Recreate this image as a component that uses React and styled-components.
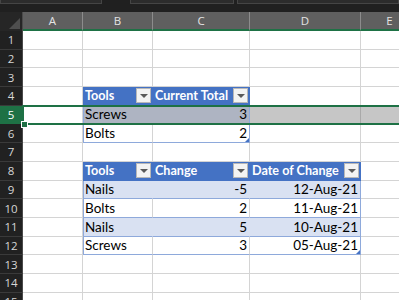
import React from "react";
import styled, { createGlobalStyle, css } from "styled-components";

const GlobalStyle = createGlobalStyle`
  html, body {
    margin: 0;
    padding: 0;
    background: #1f1f1f;
  }
`;

const COLUMNS = [
  { key: "A", width: 60 },
  { key: "B", width: 70 },
  { key: "C", width: 97 },
  { key: "D", width: 111 },
  { key: "E", width: 58 },
];

const ROW_COUNT = 15;
const SELECTED_ROW = 5;
const ACTIVE_COL = "A";

// cells that hold something: the two excel tables
const CELLS = {
  B4: { v: "Tools", head: true, filter: true, first: true },
  C4: { v: "Current Total", head: true, filter: true, last: true },
  B5: { v: "Screws", band: true, first: true },
  C5: { v: "3", num: true, band: true, last: true },
  B6: { v: "Bolts", table: true, first: true },
  C6: { v: "2", num: true, table: true, last: true, handle: true },

  B8: { v: "Tools", head: true, filter: true, first: true },
  C8: { v: "Change", head: true, filter: true },
  D8: { v: "Date of Change", head: true, filter: true, last: true },
  B9: { v: "Nails", band: true, first: true },
  C9: { v: "-5", num: true, band: true },
  D9: { v: "12-Aug-21", num: true, band: true, last: true },
  B10: { v: "Bolts", table: true, first: true },
  C10: { v: "2", num: true, table: true },
  D10: { v: "11-Aug-21", num: true, table: true, last: true },
  B11: { v: "Nails", band: true, first: true },
  C11: { v: "5", num: true, band: true },
  D11: { v: "10-Aug-21", num: true, band: true, last: true },
  B12: { v: "Screws", table: true, first: true },
  C12: { v: "3", num: true, table: true },
  D12: { v: "05-Aug-21", num: true, table: true, last: true, handle: true },
};

const Window = styled.div`
  width: 399px;
  height: 300px;
  overflow: hidden;
  display: flex;
  flex-direction: column;
  background: #ffffff;
`;

const TopBar = styled.div`
  height: 12px;
  flex: none;
  display: flex;
  align-items: flex-start;
  background: #202020;
`;

const BarBox = styled.div`
  height: 3px;
  width: ${(p) => (p.$width ? `${p.$width}px` : "auto")};
  flex: ${(p) => (p.$width ? "none" : 1)};
  margin-left: ${(p) => p.$gap || 0}px;
  background: #2c2c2c;
  border: 1px solid #454545;
  border-top: none;
`;

const HeaderRow = styled.div`
  display: flex;
  height: 19px;
  flex: none;
`;

const Corner = styled.div`
  width: 23px;
  flex: none;
  position: relative;
  background: #262626;
  border-right: 1px solid #4a4a4a;
  box-sizing: border-box;

  &::after {
    content: "";
    position: absolute;
    right: 2px;
    bottom: 2px;
    width: 0;
    height: 0;
    border-left: 11px solid transparent;
    border-bottom: 11px solid #4e4e4e;
  }
`;

const ColHead = styled.div`
  width: ${(p) => p.$width}px;
  flex: none;
  box-sizing: border-box;
  display: flex;
  align-items: center;
  justify-content: center;
  background: #5f5f5f;
  color: #e4e4e4;
  font-family: "Open Sans", "Liberation Sans", sans-serif;
  font-size: 11.5px;
  border-right: 1px solid #8c8c8c;
  border-bottom: 2px solid #1e7145;
`;

const Sheet = styled.div`
  display: flex;
  flex-direction: column;
`;

const Row = styled.div`
  display: flex;
  height: 18.7px;
  flex: none;
  position: relative;

  ${(p) =>
    p.$selected &&
    css`
      &::after {
        content: "";
        position: absolute;
        left: 22px;
        right: -4px;
        top: -1px;
        bottom: -1px;
        border: 2px solid #1e7145;
        border-right: none;
        pointer-events: none;
        z-index: 1;
      }
    `}
`;

const RowHead = styled.div`
  width: 23px;
  flex: none;
  box-sizing: border-box;
  display: flex;
  align-items: center;
  justify-content: center;
  background: ${(p) => (p.$selected ? "#1e7145" : "#212121")};
  color: ${(p) => (p.$selected ? "#ffffff" : "#d6d6d6")};
  font-family: "Open Sans", "Liberation Sans", sans-serif;
  font-size: 11.5px;
  border-right: 1px solid ${(p) => (p.$selected ? "#1e7145" : "#4a4a4a")};
  border-bottom: 1px solid ${(p) => (p.$selected ? "#1e7145" : "#3a3a3a")};
`;

const FillHandle = styled.div`
  position: absolute;
  left: 21px;
  bottom: -4px;
  width: 5px;
  height: 5px;
  background: #1e7145;
  border: 1px solid #ffffff;
  z-index: 2;
`;

const skin = {
  head: { bg: "#4472c4", right: "#4472c4", lastRight: "#4472c4", bottom: "#4472c4" },
  band: { bg: "#d9e1f2", right: "#d9e1f2", lastRight: "#8ea9db", bottom: "#8ea9db" },
  bandSel: { bg: "#aeb4c2", right: "#aeb4c2", lastRight: "#8ea9db", bottom: "#8ea9db" },
  body: { bg: "#ffffff", right: "#d4d4d4", lastRight: "#8ea9db", bottom: "#8ea9db" },
  plain: { bg: "#ffffff", right: "#d4d4d4", lastRight: "#d4d4d4", bottom: "#d4d4d4" },
  plainSel: { bg: "#c6c6c6", right: "#a9a9a9", lastRight: "#a9a9a9", bottom: "#a9a9a9" },
};

const Cell = styled.div`
  width: ${(p) => p.$width}px;
  flex: none;
  box-sizing: border-box;
  position: relative;
  display: flex;
  align-items: flex-end;
  justify-content: ${(p) => (p.$num ? "flex-end" : "flex-start")};
  padding: 0 2px 1px 2px;
  overflow: hidden;
  white-space: nowrap;
  font-family: Lato, "Liberation Sans", sans-serif;
  font-size: 13.5px;
  line-height: 16px;
  color: #000000;
  background: ${(p) => skin[p.$kind].bg};
  border-right: 1px solid
    ${(p) => (p.$last ? skin[p.$kind].lastRight : skin[p.$kind].right)};
  border-bottom: 1px solid ${(p) => skin[p.$kind].bottom};
  box-shadow: ${(p) => (p.$first && p.$kind !== "head" ? "inset 1px 0 0 #8ea9db" : "none")};

  ${(p) =>
    p.$kind === "head" &&
    css`
      align-items: center;
      justify-content: space-between;
      padding: 0 1px 0 2px;
      color: #ffffff;
      font-size: 12.6px;
      font-weight: 700;
    `}
`;

const FilterButton = styled.span`
  width: 15px;
  height: 15px;
  flex: none;
  box-sizing: border-box;
  display: flex;
  align-items: center;
  justify-content: center;
  margin-left: 2px;
  background: #f3f3f3;
  border: 1px solid #b8b8b8;

  &::before {
    content: "";
    width: 0;
    height: 0;
    border-left: 4px solid transparent;
    border-right: 4px solid transparent;
    border-top: 4px solid #5a5a5a;
  }
`;

const ResizeHandle = styled.span`
  position: absolute;
  right: 0;
  bottom: 0;
  width: 0;
  height: 0;
  border-left: 4px solid transparent;
  border-bottom: 4px solid #4472c4;
`;

function kindOf(cell, shaded) {
  if (cell && cell.head) return "head";
  if (cell && cell.band) return shaded ? "bandSel" : "band";
  if (cell && cell.table) return "body";
  return shaded ? "plainSel" : "plain";
}

function SheetRow({ index }) {
  const selected = index === SELECTED_ROW;
  return (
    <Row $selected={selected}>
      <RowHead $selected={selected}>{index}</RowHead>
      {COLUMNS.map((col) => {
        const cell = CELLS[col.key + index];
        const shaded = selected && col.key !== ACTIVE_COL;
        const kind = kindOf(cell, shaded);
        return (
          <Cell
            key={col.key}
            $width={col.width}
            $kind={kind}
            $num={cell && cell.num}
            $first={cell && cell.first}
            $last={cell && cell.last}
          >
            {cell && <span>{cell.v}</span>}
            {cell && cell.filter && <FilterButton />}
            {cell && cell.handle && <ResizeHandle />}
          </Cell>
        );
      })}
      {selected && <FillHandle />}
    </Row>
  );
}

export default function App() {
  const rows = Array.from({ length: ROW_COUNT }, (_, i) => i + 1);
  return (
    <>
      <GlobalStyle />
      <Window>
        <TopBar>
          <BarBox $width={100} />
          <BarBox $width={102} $gap={28} />
          <BarBox $gap={3} />
        </TopBar>
        <HeaderRow>
          <Corner />
          {COLUMNS.map((col) => (
            <ColHead key={col.key} $width={col.width}>
              {col.key}
            </ColHead>
          ))}
        </HeaderRow>
        <Sheet>
          {rows.map((r) => (
            <SheetRow key={r} index={r} />
          ))}
        </Sheet>
      </Window>
    </>
  );
}
